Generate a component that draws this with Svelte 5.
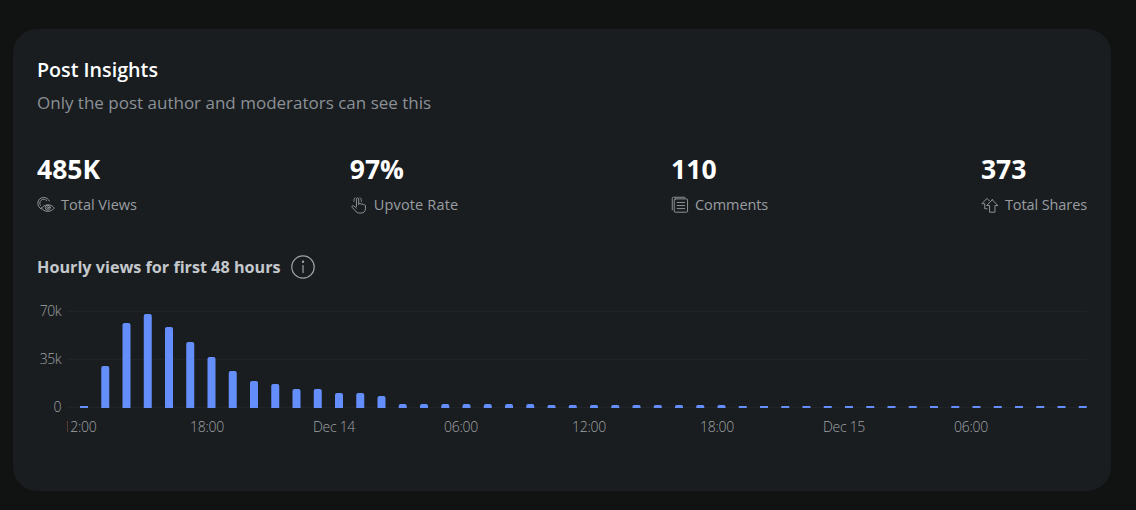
<script lang="ts">
  // Post insights card: headline stats plus hourly views chart
  const stats = [
    { value: '485K', label: 'Total Views', icon: 'views' },
    { value: '97%', label: 'Upvote Rate', icon: 'upvote' },
    { value: '110', label: 'Comments', icon: 'comments' },
    { value: '373', label: 'Total Shares', icon: 'shares' }
  ];

  const heights = [
    2, 42, 85, 94, 81, 66, 51, 37, 27, 24, 19, 19, 15, 15, 12,
    4, 4, 4, 4, 4, 4, 4, 3, 3, 3, 3, 3, 3, 3, 3, 3,
    2, 2, 2, 2, 2, 2, 2, 2, 2, 2, 2, 2, 2, 2, 2, 2, 2
  ];

  const BAR_STEP = 21.25;
  const BASE = 116;

  const xTicks = [
    { x: 42.5, label: '12:00' },
    { x: 170, label: '18:00' },
    { x: 297, label: 'Dec 14' },
    { x: 424, label: '06:00' },
    { x: 552, label: '12:00' },
    { x: 680, label: '18:00' },
    { x: 807, label: 'Dec 15' },
    { x: 934, label: '06:00' }
  ];

  function barPath(x: number, h: number) {
    if (h <= 2) return `M${x} ${BASE}v${-h}h8v${h}z`;
    const r = Math.min(2, h / 2);
    return `M${x} ${BASE}v${-(h - r)}q0 ${-r} ${r} ${-r}h${8 - 2 * r}q${r} 0 ${r} ${r}v${h - r}z`;
  }
</script>

<div class="page">
  <section class="card">
    <h2>Post Insights</h2>
    <p class="sub">Only the post author and moderators can see this</p>

    <div class="stats">
      {#each stats as s}
        <div class="stat">
          <div class="value">{s.value}</div>
          <div class="label">
            <svg class="icon" viewBox="0 0 20 20" fill="none" stroke="currentColor" stroke-width="1" stroke-linecap="round" stroke-linejoin="round">
              {#if s.icon === 'views'}
                <path d="M4.6 14.6C2.4 13.2.9 10.6.9 8 .9 4.4 3.8 1.6 7.4 1.6c2.8 0 5.2 1.6 6.3 4" />
                <path d="M3.8 10.4c-.5-.8-.7-1.6-.7-2.4 0-2.4 2-4.4 4.4-4.4 1.4 0 2.6.6 3.4 1.6" />
                <path d="M5 13.4c2.6-4.2 10.6-5.4 14.2 0-3.6 5-11 5-14.2 0z" />
                <circle cx="12" cy="13" r="2.8" />
                <circle cx="12" cy="13" r="1.1" />
              {:else if s.icon === 'upvote'}
                <path d="M7.2 11.6V3.4c0-1.7 2.5-1.7 2.5 0v6" />
                <path d="M9.7 8.8c.7-1 2.4-.8 2.6.5.7-.9 2.3-.6 2.5.6.8-.6 2.4-.3 2.4 1.2v3.2c0 2.6-2 4.6-4.8 4.6h-2c-2 0-3.2-.8-4.2-2.2L2.4 12.6c-.8-1.2.8-2.6 2-1.5l2.8 2.4" />
                <path d="M4.4 6c-.3-1.6.2-3 1.2-4M12.6 6c.3-1.6-.2-3-1.2-4" />
              {:else if s.icon === 'comments'}
                <rect x="3.6" y="3.2" width="14.8" height="14.8" rx="1.2" />
                <path d="M1.4 15.4V2.6c0-.7.5-1.2 1.2-1.2h12.8" />
                <path d="M6.8 7.2h8.4M6.8 10.6h8.4M6.8 14h8.4" />
              {:else}
                <path d="M12.5 4.2l6.2 6.4h-3.2V18H9.5v-7.4H6.3l6.2-6.4z" />
                <path d="M9.2 5.4L6.6 2.6 1 8.6h3.2v5.6h2.6" />
              {/if}
            </svg>
            <span>{s.label}</span>
          </div>
        </div>
      {/each}
    </div>

    <div class="chart-title">
      <span>Hourly views for first 48 hours</span>
      <svg class="info" viewBox="0 0 24 24" fill="none" stroke="currentColor" stroke-width="1.2" stroke-linecap="round">
        <circle cx="12" cy="12" r="11.2" />
        <path d="M12 10.6v7" />
        <circle cx="12" cy="6.8" r="0.6" />
      </svg>
    </div>

    <svg class="chart" width="1050" height="150" viewBox="0 0 1050 150">
      <defs>
        <clipPath id="x-clip"><rect x="30" y="120" width="1020" height="30" /></clipPath>
      </defs>
      <g class="grid">
        <line x1="30" x2="1050" y1="19.5" y2="19.5" />
        <line x1="30" x2="1050" y1="67.5" y2="67.5" />
        <line x1="30" x2="1050" y1="115.5" y2="115.5" />
      </g>
      <g class="y-labels">
        <text x="24" y="24">70k</text>
        <text x="24" y="72">35k</text>
        <text x="24" y="120">0</text>
      </g>
      {#each heights as h, i}
        <path class="bar" d={barPath(43 + i * BAR_STEP, h)} />
      {/each}
      <g class="x-labels" clip-path="url(#x-clip)">
        {#each xTicks as t}
          <text x={t.x} y="140">{t.label}</text>
        {/each}
      </g>
    </svg>
  </section>
</div>

<style>
  :global(body) {
    background: #111212;
  }
  .page {
    height: 510px;
    box-sizing: border-box;
    padding: 29px 25px 19px 13px;
    font-family: "Open Sans", "Noto Sans", sans-serif;
  }
  .card {
    height: 462px;
    box-sizing: border-box;
    padding: 28px 24px 0;
    background: #191d20;
    border-radius: 24px;
  }
  h2 {
    margin: 0;
    font-size: 19.7px;
    line-height: 26px;
    font-weight: 600;
    color: #fff;
  }
  .sub {
    margin: 8px 0 0;
    font-size: 17px;
    line-height: 24px;
    color: #8b9196;
  }
  .stats {
    display: flex;
    justify-content: space-between;
    margin-top: 37px;
  }
  .value {
    font-size: 26.5px;
    line-height: 34px;
    font-weight: 700;
    color: #fff;
  }
  .label {
    display: flex;
    align-items: center;
    gap: 6px;
    margin-top: 9px;
    font-size: 14.5px;
    line-height: 20px;
    color: #9a9da0;
  }
  .stat:nth-child(2) .label span {
    letter-spacing: 0.15px;
  }
  .stat:nth-child(3) .label span {
    letter-spacing: -0.1px;
  }
  .stat:nth-child(4) .label span {
    letter-spacing: -0.1px;
  }
  .icon {
    width: 18px;
    height: 18px;
  }
  .chart-title {
    display: flex;
    align-items: center;
    gap: 10px;
    margin-top: 40px;
    font-size: 16.2px;
    line-height: 24px;
    font-weight: 700;
    color: #c4c8cc;
  }
  .info {
    width: 24px;
    height: 24px;
    color: #a0a3a6;
  }
  .chart {
    display: block;
    margin-top: 13px;
  }
  .grid line {
    stroke: #202429;
    stroke-width: 1;
  }
  .y-labels text {
    fill: #a0a3a6;
    font-size: 14px;
    font-weight: 300;
    text-anchor: end;
    letter-spacing: -0.5px;
  }
  .x-labels text {
    fill: #a0a3a6;
    font-size: 14px;
    font-weight: 300;
    text-anchor: middle;
    letter-spacing: -0.3px;
  }
  .bar {
    fill: #648efc;
  }
</style>
